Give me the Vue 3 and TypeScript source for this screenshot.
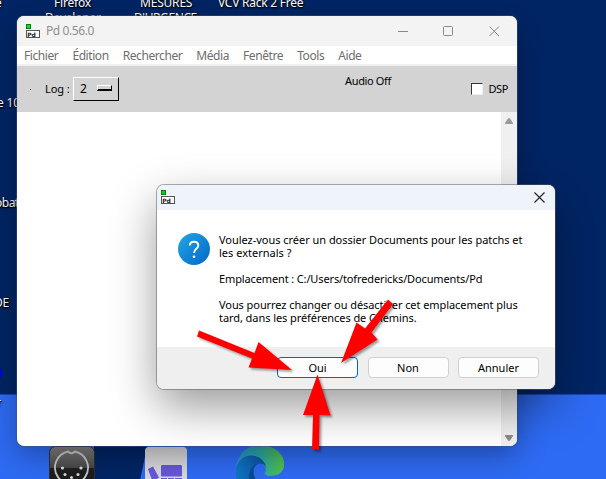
<script setup lang="ts">
interface Label { text: string; cls: string }
interface Choice { text: string; focus?: boolean }

const labels: Label[] = [
  { text: 'Firefox', cls: 'l-firefox' },
  { text: 'Developer', cls: 'l-dev' },
  { text: 'MESURES', cls: 'l-mesures' },
  { text: "D'URGENCE", cls: 'l-urgence' },
  { text: 'VCV Rack 2 Free', cls: 'l-vcv' },
  { text: 'e', cls: 'l-e' },
  { text: 'e 10', cls: 'l-ten' },
  { text: 'obat', cls: 'l-obat' },
  { text: 'DE', cls: 'l-de' },
  { text: 'r', cls: 'l-r' },
]
const menus: string[] = ['Fichier', 'Édition', 'Rechercher', 'Média', 'Fenêtre', 'Tools', 'Aide']
const choices: Choice[] = [{ text: 'Oui', focus: true }, { text: 'Non' }, { text: 'Annuler' }]
const arrows: string[] = [
  '199,330.500 254.500,353 258.500,342 292,370 248.500,367.500 252,358.500 197,336.500',
  '388,299.500 393,304 371.500,332.500 377.500,339.500 341,363 356.500,322.500 365,328.500',
  '317.500,374.500 330.500,415.500 319.500,415 319,449.500 312,449.500 313,415 303,415',
]
</script>

<template>
  <main class="desktop">
    <div class="ground"></div>
    <span v-for="l in labels" :key="l.cls" class="label" :class="l.cls">{{ l.text }}</span>
    <i class="blue-dot"></i>

    <svg class="icon midi" width="46" height="34" viewBox="0 0 46 34">
      <defs>
        <linearGradient id="mg" x1="0" y1="0" x2="0" y2="1">
          <stop offset="0" stop-color="#858585" /><stop offset=".42" stop-color="#484848" /><stop offset=".44" stop-color="#202020" /><stop offset="1" stop-color="#161616" />
        </linearGradient>
      </defs>
      <rect x="0.500" y="0.500" width="45" height="50" rx="6" fill="url(#mg)" stroke="#303030" />
      <path d="M19 5.500A16.500 16.500 0 1 0 26 5.500Q22.500 9 19 5.500Z" fill="none" stroke="#c9c9c9" stroke-width="1.800" />
      <g fill="#ddd"><circle cx="13.500" cy="22" r="1.600" /><circle cx="32" cy="22" r="1.600" /><circle cx="16" cy="28.500" r="1.500" /><circle cx="29" cy="28.500" r="1.500" /><circle cx="22.500" cy="31.500" r="1.500" /></g>
    </svg>
    <svg class="icon stack" width="42" height="33" viewBox="0 0 42 33">
      <rect width="42" height="44" rx="4" fill="#d9d8dc" />
      <g fill="#6659dc"><rect x="16" y="18" width="21" height="11.500" rx="1" /><path d="M3 22l5-2.500 6 11-4 2.500H7z" /><rect x="16" y="31" width="6" height="3" /><rect x="23" y="31" width="6" height="3" /><rect x="30" y="31" width="7" height="3" /></g>
    </svg>
    <svg class="icon edge" width="49" height="34" viewBox="0 0 49 34">
      <defs>
        <linearGradient id="eg"><stop offset="0" stop-color="#2795cf" /><stop offset=".5" stop-color="#2da9a6" /><stop offset="1" stop-color="#54c445" /></linearGradient>
        <linearGradient id="eb"><stop offset="0" stop-color="#0f78c6" /><stop offset="1" stop-color="#0a51a4" /></linearGradient>
      </defs>
      <path d="M0 21C2 8 11 -1 24 -1C39 -1 49 9 48 19C48 27 41 30 33 30C28 29 28 27 30 25C29 15 18 9 10 12C5 14 2 17 0 21Z" fill="url(#eg)" />
      <path d="M0 22C3 13 9 9 16 9.500C25 10 30 17 30 22C29 18 25 16 21 18C16 21 16 28 20 34H1Q-1 28 0 22Z" fill="url(#eb)" />
      <path d="M28 17.500C22 15 12 20 13 34H20C16 27 17 20 22 18Q26 16.500 28 17.500Z" fill="#0b4b94" />
    </svg>

    <section class="window">
      <header class="titlebar">
        <svg class="pd" width="15" height="15" viewBox="0 0 15 15">
          <rect x=".5" y=".5" width="4" height="4" fill="#00e515" stroke="#087b12" />
          <rect x=".5" y="6.500" width="13" height="7" fill="#fff" stroke="#555" />
          <text x="1.200" y="12.600" class="pdtext">Pd</text>
        </svg>
        <h1>Pd 0.56.0</h1>
        <svg class="controls" width="102" height="11" viewBox="0 0 102 11" fill="none" stroke="#898989">
          <path d="M0 5.500H10M91.500.5l9.500 9.500M101 .5l-9.500 9.500" /><rect x="45.500" y=".5" width="9" height="9" rx="1" />
        </svg>
      </header>
      <nav><span v-for="m in menus" :key="m">{{ m }}</span></nav>
      <div class="toolbar">
        <i class="speck"></i>
        <span class="log">Log :</span>
        <div class="select"><span>2</span><i></i></div>
        <span class="audio">Audio Off</span>
        <i class="check"></i>
        <span class="dsp">DSP</span>
      </div>
      <div class="console">
        <div class="scroll">
          <svg width="8" height="6" viewBox="0 0 8 6"><path d="M3 .5Q4 -.3 5 .5L8 5V6H0V5Z" fill="#9b9b9b" /></svg>
          <svg width="8" height="6" viewBox="0 0 8 6"><path d="M0 0H8V1L5 5.500Q4 6.300 3 5.500L0 1Z" fill="#8b8b8b" /></svg>
        </div>
      </div>
    </section>

    <section class="dialog">
      <header>
        <svg class="pd" width="15" height="15" viewBox="0 0 15 15">
          <rect x=".5" y=".5" width="4" height="4" fill="#00d515" stroke="#087b12" />
          <rect x=".5" y="6.500" width="13" height="7" fill="#fff" stroke="#555" />
          <text x="1.200" y="12.600" class="pdtext">Pd</text>
        </svg>
        <svg width="11" height="11" viewBox="0 0 11 11"><path d="M.5.5l10 10M10.500.5l-10 10" stroke="#222" stroke-width="1.100" /></svg>
      </header>
      <div class="message">
        <svg class="question" width="32" height="32" viewBox="0 0 32 32">
          <defs><linearGradient id="qg" x2="1" y2="1"><stop stop-color="#26a6e3" /><stop offset="1" stop-color="#0067c9" /></linearGradient></defs>
          <circle cx="16" cy="16" r="16" fill="url(#qg)" />
          <path d="M11.800 12.500C11.800 10 13.500 8.700 16 8.700S20.300 10.200 20.300 12.500C20.300 15.700 16 15.800 16 20" fill="none" stroke="#fff" stroke-width="1.900" />
          <circle cx="16" cy="23.700" r="1.300" fill="#fff" />
        </svg>
        <div class="copy">
          <p><span class="intro">Voulez-vous créer un dossier Documents pour les patchs et</span><br>les externals ?</p>
          <p class="path">Emplacement : C:/Users/tofredericks/Documents/Pd</p>
          <p class="hint">Vous pourrez changer ou désactiver cet emplacement plus<br>tard, dans les préférences de Chemins.</p>
        </div>
      </div>
      <footer><button v-for="c in choices" :key="c.text" :class="{ focus: c.focus }">{{ c.text }}</button></footer>
    </section>

    <svg class="arrows" width="606" height="479" viewBox="0 0 606 479"><polygon v-for="a in arrows" :key="a" :points="a" fill="#f00" /></svg>
  </main>
</template>

<style>
body { margin: 0; overflow: hidden; }
</style>
<style scoped>
* { box-sizing: border-box; }
.desktop { position: relative; width: 606px; height: 479px; overflow: hidden; background: #002565; font-family: "Noto Sans", "Open Sans", sans-serif; font-size: 12px; }
.ground { position: absolute; left: 0; right: 0; top: 394px; bottom: 0; background: #2e6bf4; border-top: 1px solid #1746b0; }
.ground::after { content: ""; position: absolute; left: 94px; top: 0; width: 64px; height: 85px; background: #002565; clip-path: polygon(0 0, 100% 0, 72% 100%, 0 100%); }
.label { position: absolute; color: #fff; line-height: 14px; white-space: nowrap; text-shadow: 1px 1px 2px #000, 0 1px 1px #000; letter-spacing: -.2px; }
.l-firefox { left: 54px; top: -4px; }
.l-dev { left: 45px; top: 11px; }
.l-mesures { left: 140px; top: -4px; }
.l-urgence { left: 134px; top: 11px; letter-spacing: -.4px; }
.l-vcv { left: 218px; top: -4px; letter-spacing: -.25px; }
.l-e { left: -5px; top: -4px; }
.l-ten { left: -3px; top: 96px; }
.l-obat { left: -5px; top: 196px; letter-spacing: -.5px; }
.l-de { left: -6px; top: 296px; }
.l-r { left: -4px; top: 396px; }
.blue-dot { position: absolute; left: -14px; top: 365px; width: 16px; height: 16px; border-radius: 50%; background: #0000f4; }
.icon { position: absolute; }
.midi { left: 49px; top: 446px; }
.stack { left: 145px; top: 447px; }
.edge { left: 236px; top: 446px; }
.window { position: absolute; left: 17px; top: 16px; width: 500px; height: 430px; border-radius: 7px; overflow: hidden; background: #fff; display: flex; flex-direction: column; box-shadow: 0 0 0 1px rgba(60,80,120,.5), 0 10px 30px rgba(0,0,0,.32); }
.titlebar { height: 30px; flex: none; background: #f3f3f3; display: flex; align-items: center; padding: 0 17px 0 9px; color: #8f8f8f; }
h1 { margin: 0 auto 0 5px; font: inherit; letter-spacing: -.42px; position: relative; top: -1px; }
.pdtext { font: bold 6px "DejaVu Sans", sans-serif; fill: #222; }
nav { height: 20px; flex: none; border-bottom: 2px solid #f0f0f0; display: flex; gap: 14px; padding: 1px 7px; line-height: 18px; color: #6d6d6d; letter-spacing: -.42px; }
.toolbar { height: 46px; flex: none; background: #d3d3d3; display: flex; align-items: center; padding: 0 9px 0 13px; font-size: 11px; color: #000; }
.speck { width: 1px; height: 1px; background: #555; margin-right: 14px; }
.log { width: 28px; margin-top: -2px; letter-spacing: -.1px; }
.select { width: 46px; height: 24px; display: flex; align-items: center; justify-content: space-between; border: 1px solid; border-color: #fff #000 #000 #fff; padding: 0 6px 0 6px; font-size: 12px; line-height: 20px; }
.select i { width: 15px; height: 6px; border: 1px solid; border-color: #fff #000 #000 #fff; border-bottom-width: 2px; background: #d3d3d3; margin-top: -2px; }
.audio { margin-left: 226px; margin-bottom: 17px; margin-right: auto; letter-spacing: -.35px; }
.check { width: 12px; height: 12px; border: 1px solid; border-color: #333 #eee #eee #333; background: #fff; margin-right: 5px; margin-top: -1px; }
.dsp { letter-spacing: -.4px; margin-top: -2px; }
.console { flex: 1; display: flex; justify-content: flex-end; }
.scroll { width: 16px; background: #f0f0f0; display: flex; flex-direction: column; justify-content: space-between; align-items: center; padding: 6px 0 5px; }
.dialog { position: absolute; left: 157px; top: 185px; width: 398px; height: 204px; border-radius: 7px; overflow: hidden; display: flex; flex-direction: column; background: #fff; box-shadow: 0 0 0 1px rgba(90,90,90,.5), 0 18px 46px rgba(0,0,0,.4); font-size: 11px; color: #000; }
.dialog header { height: 25px; flex: none; background: #eff3fa; display: flex; justify-content: space-between; align-items: center; padding: 0 10px 0 4px; }
.message { flex: 1; display: flex; padding: 23px 0 0 21px; gap: 9px; }
.copy { line-height: 13px; white-space: nowrap; }
.intro { letter-spacing: -.03px; }
.path { letter-spacing: -.13px; }
.hint { letter-spacing: -.07px; }
p { margin: 0 0 13px; }
footer { height: 42px; flex: none; background: #efefef; display: flex; gap: 9.500px; justify-content: flex-end; padding: 10px 16px 11px 0; }
button { width: 81px; height: 21px; padding: 0; font: 11px/18px "Noto Sans", sans-serif; border: 1px solid #d0d0d0; border-radius: 4px; background: #fdfdfd; color: #000; }
button.focus { border-color: #0067c0; }
.arrows { position: absolute; left: 0; top: 0; filter: drop-shadow(2px 2px 1px rgba(0,0,0,.38)); }
</style>
